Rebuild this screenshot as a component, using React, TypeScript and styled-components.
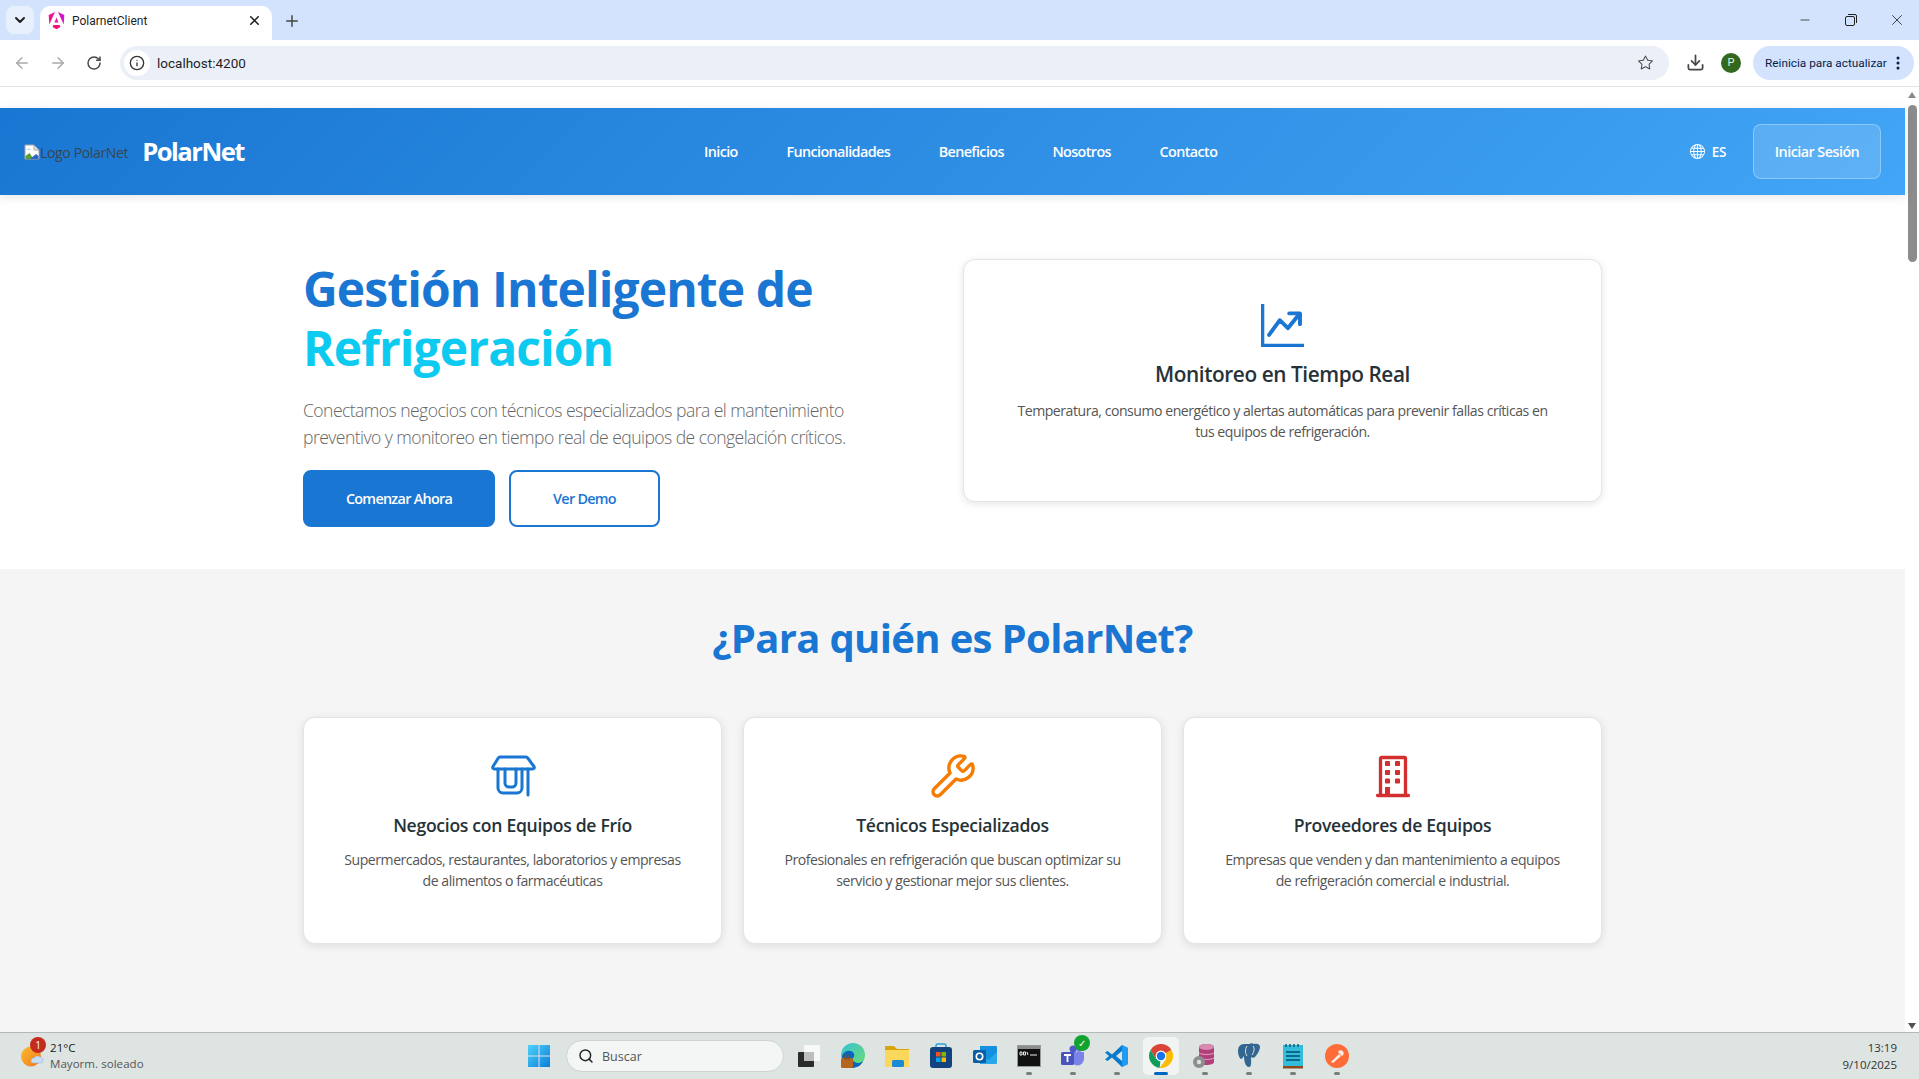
import React from "react";
import styled, { createGlobalStyle } from "styled-components";
import { BsGraphUpArrow, BsGlobe, BsStar, BsThreeDotsVertical } from "react-icons/bs";
import { ArrowLeft, ArrowRight, RotateCw, Info, Download, Plus, X, ChevronDown, Search, Minus, Wrench } from "lucide-react";

const UI = `"Open Sans", "Noto Sans", sans-serif`;

const Global = createGlobalStyle`
  html, body { margin: 0; padding: 0; height: 100%; overflow: hidden; background: #fff; }
  * { box-sizing: border-box; }
  body { font-family: ${UI}; }
`;

const Shell = styled.div`
  width: 1919px; height: 1079px; display: flex; flex-direction: column; overflow: hidden;
`;
const TabStrip = styled.div`
  height: 40px; flex: none; background: #d3e3fd; display: flex; align-items: flex-end; padding-left: 6px;
`;
const TabMenu = styled.div`
  width: 28px; height: 28px; margin-bottom: 6px; border-radius: 8px; background: #e9f0fd; display: flex; align-items: center; justify-content: center; color: #1f1f1f;
`;
const Tab = styled.div`
  width: 232px; height: 34px; margin-left: 6px; background: #fff; border-radius: 10px 10px 0 0; display: flex; align-items: center; padding: 0 10px 5px 8px; font: 400 12px "Roboto", sans-serif; color: #1f1f1f;
`;
const TabTitle = styled.span` margin-left: 7px; flex: 1; `;
const NewTab = styled.div` width: 40px; height: 34px; padding-bottom: 5px; display: flex; align-items: center; justify-content: center; color: #444; `;
const WinControls = styled.div` margin-left: auto; margin-right: -1px; display: flex; height: 40px; align-items: center; color: #222; `;
const WinButton = styled.div` width: 46px; display: flex; justify-content: center; align-items: center; `;
const Toolbar = styled.div`
  height: 47px; flex: none; background: #fff; border-bottom: 1px solid #e1e3e6; display: flex; align-items: center; padding: 0 5px 1px 4px;
`;
const NavIcon = styled.div<{ $dim?: boolean }>`
  width: 36px; height: 34px; display: flex; align-items: center; justify-content: center; color: ${p => (p.$dim ? "#a8abaf" : "#474747")};
`;
const UrlBar = styled.div`
  flex: 1; height: 34px; margin-left: 8px; border-radius: 17px; background: #ebf0f8; display: flex; align-items: center; padding: 0 16px 0 4px; font: 400 13.5px "Roboto", sans-serif; color: #1f1f1f;
`;
const InfoChip = styled.div` width: 26px; height: 26px; border-radius: 50%; background: #fff; display: flex; align-items: center; justify-content: center; margin-right: 7px; `;
const UrlText = styled.span` flex: 1; `;
const ToolRight = styled.div` width: 52px; display: flex; justify-content: center; color: #474747; `;
const Avatar = styled.div` width: 20px; height: 20px; border-radius: 50%; background: #33691e; color: #e8f5e0; font: 400 11px "Roboto", sans-serif; display: flex; align-items: center; justify-content: center; `;
const RestartPill = styled.div`
  width: 161px; height: 34px; margin-left: 12px; border-radius: 17px; background: #d3e3fd; color: #041e49; font: 400 11.8px "Roboto", sans-serif; display: flex; align-items: center; padding-left: 12px; gap: 3px; white-space: nowrap;
`;

const Viewport = styled.div` flex: 1; min-height: 0; display: flex; background: #fff; `;
const Page = styled.div` flex: 1; min-width: 0; padding-top: 21px; background: #fff; display: flex; flex-direction: column; `;
const Scrollbar = styled.div` width: 14px; flex: none; background: #fff; display: flex; flex-direction: column; align-items: center; padding-top: 5px; `;
const ScrollUp = styled.div` width: 0; height: 0; border-left: 4.5px solid transparent; border-right: 4.5px solid transparent; border-bottom: 6px solid #8a8a8a; `;
const ScrollThumb = styled.div` width: 9px; height: 157px; border-radius: 5px; background: #8c8c8c; margin-top: 7px; `;
const ScrollDown = styled.div` width: 0; height: 0; margin-top: auto; margin-bottom: 3px; border-left: 4.5px solid transparent; border-right: 4.5px solid transparent; border-top: 6px solid #505050; `;

const Header = styled.header`
  height: 87px; flex: none; background: linear-gradient(135deg, #1976d2, #42a5f5); display: flex; align-items: center; padding: 0 24px; box-shadow: 0 2px 10px rgba(0,0,0,.1); color: #fff; position: relative;
`;
const LogoGroup = styled.div` display: flex; align-items: center; width: 680px; `;
const BrokenImg = styled.span` display: inline-flex; align-items: center; padding-top: 1px; font: 400 14px ${UI}; letter-spacing: -.35px; color: #37474f; white-space: nowrap; `;
const Brand = styled.span` margin-left: 14px; font: 700 25.6px ${UI}; letter-spacing: -1.5px; color: #fff; `;
const Nav = styled.nav` display: flex; gap: 48.6px; `;
const NavLink = styled.a` font: 600 14.4px ${UI}; letter-spacing: -.62px; color: #fff; white-space: nowrap; `;
const HeaderRight = styled.div` margin-left: auto; display: flex; align-items: center; `;
const Lang = styled.div` display: flex; align-items: center; gap: 7px; font: 600 13.5px ${UI}; letter-spacing: -.3px; margin-right: 27px; `;
const Login = styled.button`
  width: 128px; height: 55px; border-radius: 8px; background: rgba(255,255,255,.15); border: 1px solid rgba(255,255,255,.3); color: #fff; font: 600 14.4px ${UI}; letter-spacing: -.55px; padding: 0;
`;

const Hero = styled.section` height: 374px; flex: none; background: #fff; display: flex; justify-content: center; padding-top: 64px; `;
const HeroInner = styled.div` width: 1299px; display: grid; grid-template-columns: 660px 639px; `;
const HeroText = styled.div` display: flex; flex-direction: column; `;
const H1 = styled.h1` margin: 0; font: 700 48px/59px ${UI}; letter-spacing: -.9px; color: #1976d2; `;
const Accent = styled.span` display: block; color: #0dcaf0; `;
const Lead = styled.p` margin: 20px 0 0; font: 300 17.6px/27px ${UI}; letter-spacing: -.57px; color: #666; white-space: nowrap; `;
const Buttons = styled.div` display: flex; gap: 14px; margin-top: 19px; `;
const Btn = styled.button<{ $outline?: boolean }>`
  height: 57px; width: ${p => (p.$outline ? 151 : 192)}px; border-radius: 8px; font: 600 14.4px ${UI}; letter-spacing: -.72px; padding: 0;
  background: ${p => (p.$outline ? "#fff" : "#1976d2")}; color: ${p => (p.$outline ? "#1976d2" : "#fff")}; border: 2px solid #1976d2;
`;
const HeroCard = styled.div`
  height: 243px; background: #fff; border: 1px solid #e4e4e4; border-radius: 12px; box-shadow: 0 2px 8px rgba(0,0,0,.1); display: flex; flex-direction: column; align-items: center; padding: 44px 48px 0; text-align: center; color: #1976d2;
`;
const ChartIcon = styled(BsGraphUpArrow)` stroke: currentColor; stroke-width: .45px; flex: none; `;
const CardTitle = styled.h3<{ $big?: boolean }>`
  margin: ${p => (p.$big ? "14px" : "15px")} 0 0; font: ${p => (p.$big ? "600 20.8px/27px" : "600 17.6px/24px")} ${UI}; letter-spacing: ${p => (p.$big ? "-.42px" : "-.3px")}; color: #263238;
`;
const CardText = styled.p` margin: 12px 0 0; font: 400 14.08px/21px ${UI}; letter-spacing: -.47px; color: #555; `;

const Audience = styled.section` flex: 1; min-height: 0; background: #f5f5f5; display: flex; flex-direction: column; align-items: center; `;
const H2 = styled.h2` margin: 40px 0 0; height: 58px; font: 700 40px/58px ${UI}; letter-spacing: -.65px; color: #1976d2; `;
const Cards = styled.div` width: 1299px; margin-top: 50px; display: grid; grid-template-columns: repeat(3, 1fr); gap: 21px; `;
const Card = styled.div`
  height: 227px; background: #fff; border: 1px solid #e4e4e4; border-radius: 12px; box-shadow: 0 2px 8px rgba(0,0,0,.1); display: flex; flex-direction: column; align-items: center; padding: 36px 32px 0; text-align: center;
`;
const IconSlot = styled.div<{ $c: string }>` height: 44px; display: flex; align-items: center; justify-content: center; color: ${p => p.$c}; `;
const ShopGlyph = styled.svg` margin-left: 2px; fill: none; stroke: #1976d2; stroke-width: 3; stroke-linejoin: round; stroke-linecap: round; `;

const Taskbar = styled.footer`
  height: 47px; flex: none; background: #dde4e1; border-top: 1px solid #b5b8b7; display: flex; align-items: center; font: 400 12px ${UI};
`;
const Weather = styled.div` flex: 0 0 517px; display: flex; align-items: center; padding-left: 21px; position: relative; `;
const Badge = styled.span` position: absolute; left: 30px; top: -3px; width: 16px; height: 16px; border-radius: 50%; background: #c42b1c; color: #fff; font-size: 10px; line-height: 16px; text-align: center; `;
const WeatherText = styled.div` margin-left: 6px; line-height: 16px; font-size: 11.5px; letter-spacing: .05px; color: #1a1a1a; `;
const Muted = styled.div` color: #555; `;
const StartBtn = styled.div` width: 44px; display: flex; justify-content: center; `;
const SearchBox = styled.div` width: 218px; height: 32px; margin: 0 3px 0 5px; background: #f3f6f4; border: 1px solid #cfd4d2; border-radius: 16px; display: flex; align-items: center; padding-left: 11px; gap: 8px; color: #555; font-size: 12.5px; `;
const TaskIcon = styled.div<{ $active?: boolean; $open?: boolean }>`
  width: ${p => (p.$active ? 36 : 44)}px; margin: ${p => (p.$active ? "0 4px" : "0")}; height: 38px; border-radius: 5px; display: flex; align-items: center; justify-content: center; position: relative;
  background: ${p => (p.$active ? "#f1f4f3" : "transparent")};
  &::after {
    content: ""; position: absolute; bottom: 0; left: 50%; transform: translateX(-50%); height: 3px; border-radius: 2px;
    width: ${p => (p.$active ? 14 : 6)}px; display: ${p => (p.$open || p.$active ? "block" : "none")}; background: ${p => (p.$active ? "#0067c0" : "#7a7d7c")};
  }
`;
const Check = styled.span` position: absolute; right: 5px; top: -2px; width: 16px; height: 16px; border-radius: 50%; background: #10a32f; color: #fff; font-size: 10px; line-height: 16px; text-align: center; `;
const Clock = styled.div` margin-left: auto; padding-right: 22px; text-align: right; font-size: 11.5px; line-height: 17px; color: #333; `;

const BrokenIcon = () => (
  <svg width="16" height="16" viewBox="0 0 16 16">
    <path d="M1 1h9l5 5v9H1z" fill="#fff" stroke="#a6a6a6" />
    <path d="M10 1v5h5z" fill="#dfe5ea" stroke="#a6a6a6" />
    <path d="M2 6c2-2 4-2 5 0H2z" fill="#b7d4f7" />
    <path d="M1.500 15v-3l4-3 4 6z" fill="#5aa02c" />
    <path d="M6 15l6-5 2.500 2v3z" fill="#2c66c9" />
  </svg>
);
const AngularIcon = () => (
  <svg width="17" height="18" viewBox="0 0 17 18">
    <defs>
      <linearGradient id="ng" x1="0" y1="1" x2="1" y2="0"><stop offset="0" stopColor="#f0143c" /><stop offset=".5" stopColor="#f5109a" /><stop offset="1" stopColor="#b818ef" /></linearGradient>
    </defs>
    <path d="M16.300 3l-.6 9.400L10 0zM12.400 15l-3.900 2.200L4.600 15l.8-2h6.200zM8.500 5.600l2 5H6.500zM1.300 12.400L.7 3 7 0z" fill="url(#ng)" />
  </svg>
);
const ShopIcon = () => (
  <ShopGlyph width="46" height="44" viewBox="0 0 46 44">
    <path d="M9 3h26a2 2 0 0 1 1.700 1L43 12.500c.8 1.300 0 2.500-1.500 2.500h-38c-1.500 0-2.300-1.200-1.500-2.500L7.300 4A2 2 0 0 1 9 3z" />
    <path d="M7 15v19a5 5 0 0 0 5 5h14a5 5 0 0 0 5-5V15" />
    <path d="M14 15v14a4 4 0 0 0 4 4h3a4 4 0 0 0 4-4V15" />
    <path d="M37 15v26" />
  </ShopGlyph>
);
const BuildingIcon = () => (
  <svg width="34" height="44" viewBox="0 0 34 44" fill="#d32f2f" stroke="none">
    <path d="M4.500 41V4.500a1 1 0 0 1 1-1h23a1 1 0 0 1 1 1V41" fill="none" stroke="#d32f2f" strokeWidth="3.300" />
    <path d="M1.500 41.500h31" fill="none" stroke="#d32f2f" strokeWidth="3.300" strokeLinecap="round" />
    <rect x="9" y="7" width="5" height="5" rx=".8" /><rect x="19" y="7" width="5" height="5" rx=".8" />
    <rect x="9" y="16" width="5" height="5" rx=".8" /><rect x="19" y="16" width="5" height="5" rx=".8" />
    <rect x="9" y="24.500" width="5" height="5" rx=".8" /><rect x="19" y="24.500" width="5" height="5" rx=".8" />
    <rect x="9" y="33" width="5" height="8" />
  </svg>
);
const WinLogo = () => (
  <svg width="24" height="24" viewBox="0 0 24 24">
    <defs><linearGradient id="w" x1="0" y1="0" x2="1" y2="1"><stop offset="0" stopColor="#4fd0fb" /><stop offset="1" stopColor="#0a7fd9" /></linearGradient></defs>
    <path fill="url(#w)" d="M1 1h10.500v10.500H1zM12.500 1H23v10.500H12.500zM1 12.500h10.500V23H1zM12.500 12.500H23V23H12.500z" />
  </svg>
);
const TaskView = () => (
  <svg width="24" height="24" viewBox="0 0 24 24">
    <rect x="7" y="1" width="16" height="16" fill="#f7f8f8" />
    <rect x="1" y="8" width="16" height="15" rx="1" fill="#2b2b2b" />
    <rect x="7" y="8" width="10" height="9" fill="#bdbfbe" />
  </svg>
);
const Edge = () => (
  <svg width="26" height="26" viewBox="0 0 26 26">
    <defs><linearGradient id="e" x1="0" y1="0" x2="1" y2="1"><stop offset="0" stopColor="#36c2d6" /><stop offset="1" stopColor="#6fdc72" /></linearGradient></defs>
    <circle cx="13" cy="12" r="12" fill="url(#e)" />
    <path d="M2 13c2-6 10-7 12-2 1 3-2 5-2 5 2 5 8 5 11 2-2 5-7 7-11 7-6 0-10-5-10-12z" fill="#0c63b8" />
    <rect x="1" y="15" width="12" height="10" rx="1.500" fill="#b5651d" />
    <rect x="5" y="13" width="4" height="3" fill="none" stroke="#8a4b14" />
  </svg>
);
const Folder = () => (
  <svg width="26" height="24" viewBox="0 0 26 24">
    <path d="M1 3a1 1 0 0 1 1-1h8l3 3h12v17H1z" fill="#d9a40c" />
    <rect x="1" y="6" width="24" height="17" fill="#fbd75b" />
    <rect x="8" y="16" width="12" height="7" rx="1.500" fill="#1a8ad4" />
  </svg>
);
const Store = () => (
  <svg width="24" height="26" viewBox="0 0 24 26">
    <path d="M7 5V3a2 2 0 0 1 2-2h6a2 2 0 0 1 2 2v2" fill="none" stroke="#2aa0dc" strokeWidth="1.500" />
    <rect x="1" y="4" width="22" height="21" rx="3" fill="#12437f" />
    <rect x="7" y="9" width="4.500" height="4.500" fill="#f25022" /><rect x="12.500" y="9" width="4.500" height="4.500" fill="#7fba00" />
    <rect x="7" y="14.500" width="4.500" height="4.500" fill="#00a4ef" /><rect x="12.500" y="14.500" width="4.500" height="4.500" fill="#ffb900" />
  </svg>
);
const Outlook = () => (
  <svg width="26" height="24" viewBox="0 0 26 24">
    <path d="M8 2h16a1 1 0 0 1 1 1v15a2 2 0 0 1-2 2H8z" fill="#1490df" />
    <path d="M8 11l8.500 5L25 8v10a2 2 0 0 1-2 2H8z" fill="#28a8ea" />
    <rect x="1" y="6" width="13" height="13" rx="1.500" fill="#0a5ea8" />
    <circle cx="7.500" cy="12.500" r="3.200" fill="none" stroke="#fff" strokeWidth="1.600" />
  </svg>
);
const Terminal = () => (
  <svg width="24" height="22" viewBox="0 0 24 22">
    <rect x=".5" y=".5" width="23" height="21" fill="#111" stroke="#9a9a9a" />
    <rect x="1" y="1" width="22" height="3" fill="#8d8d8d" />
    <path d="M3 7h2v3H3zM6.500 7h2v3h-2zM10 7l1 3M13 10h7" stroke="#eee" fill="none" />
  </svg>
);
const Teams = () => (
  <svg width="26" height="24" viewBox="0 0 26 24">
    <circle cx="19" cy="5" r="3" fill="#7b83eb" />
    <path d="M11 8h13v7a6 6 0 0 1-13 0z" fill="#7b83eb" />
    <circle cx="13" cy="5" r="3.500" fill="#5059c9" />
    <rect x="1" y="8" width="13" height="13" rx="1.500" fill="#4b53bc" />
    <path d="M4 11h7M7.500 11v7" stroke="#fff" strokeWidth="1.800" />
  </svg>
);
const VSCode = () => (
  <svg width="24" height="24" viewBox="0 0 24 24">
    <path d="M17 1l6 3v16l-6 3-10-9.500L2.500 17 0 15.500 4 12 0 8.500 2.500 7 7 10.500z" fill="#0a7acc" />
    <path d="M17 1l6 3v16l-6 3z" fill="#1f9cf0" />
    <path d="M17 7l-6 5 6 5z" fill="#dde4e1" />
  </svg>
);
const ChromeIcon = () => (
  <svg width="24" height="24" viewBox="0 0 24 24">
    <path d="M12 12L22.400 6A12 12 0 0 0 1.600 6L6.800 15z" fill="#db4437" />
    <path d="M12 12l-5.200 3L1.600 6a12 12 0 0 0 9 17.900z" fill="#0f9d58" />
    <path d="M12 12l10.400-6A12 12 0 0 1 10.600 23.900L17.200 15z" fill="#fbbc04" />
    <circle cx="12" cy="12" r="5.400" fill="#fff" />
    <circle cx="12" cy="12" r="4.200" fill="#1a73e8" />
  </svg>
);
const DbIcon = () => (
  <svg width="26" height="26" viewBox="0 0 26 26">
    <path d="M7 4c0-4 15-4 15 0v15c0 4-15 4-15 0z" fill="#b0407a" />
    <ellipse cx="14.500" cy="4" rx="7.500" ry="3" fill="#d98ab2" />
    <path d="M7 10c3 2 12 2 15 0M7 15c3 2 12 2 15 0" stroke="#e3a5c5" fill="none" />
    <circle cx="7" cy="19" r="6" fill="#8e8e8e" />
    <circle cx="7" cy="19" r="2.200" fill="#e0e0e0" />
  </svg>
);
const PgIcon = () => (
  <svg width="24" height="26" viewBox="0 0 24 26">
    <path d="M7 1C3 1 1 4 1 8c0 4 2 8 3 8s2-2 3-3c0 4 1 11 5 11 3 0 2-6 2-10 1 1 3 1 4 0 2-2 5-7 5-10 0-3-3-4-6-3-2-1-3-1-5 0-2 0-3 0-5 0z" fill="#336791" />
    <path d="M10 3c-2 3-2 7 0 10M16 3c2 2 1 6-1 9" stroke="#dde4e1" fill="none" strokeWidth="1" />
  </svg>
);
const Notepad = () => (
  <svg width="24" height="26" viewBox="0 0 24 26">
    <rect x="2" y="2" width="20" height="21" fill="#35bbdc" />
    <rect x="2" y="23" width="20" height="2.500" fill="#8d4b1d" />
    <path d="M5 1v3M9 1v3M13 1v3M17 1v3" stroke="#0d5d78" strokeWidth="1.500" />
    <path d="M5 9h14M5 13h14M5 17h14" stroke="#0b6a88" strokeWidth="2" />
  </svg>
);
const Postman = () => (
  <svg width="24" height="24" viewBox="0 0 24 24">
    <circle cx="12" cy="12" r="12" fill="#ff6c37" />
    <path d="M6 18l8-8 2 2-8 7zM13 8a3 3 0 1 1 4 4z" fill="#fff" opacity=".9" />
  </svg>
);
const WeatherIcon = () => (
  <svg width="23" height="21" viewBox="0 0 23 21">
    <defs><linearGradient id="s" x1="0" y1="0" x2="1" y2="1"><stop offset="0" stopColor="#f9c02c" /><stop offset="1" stopColor="#f4731f" /></linearGradient></defs>
    <circle cx="10" cy="10.500" r="10" fill="url(#s)" />
    <path d="M10 15a3 3 0 0 1 3-3 4 4 0 0 1 6-1 3 3 0 0 1 3 4 2 2 0 0 1-2 2H12a2 2 0 0 1-2-2z" fill="#c8dcf5" stroke="#8fb3e0" strokeWidth=".5" />
  </svg>
);

const cards = [
  { title: "Negocios con Equipos de Frío", text: "Supermercados, restaurantes, laboratorios y empresas de alimentos o farmacéuticas", c: "#1976d2", icon: <ShopIcon /> },
  { title: "Técnicos Especializados", text: "Profesionales en refrigeración que buscan optimizar su servicio y gestionar mejor sus clientes.", c: "#f57c00", icon: <Wrench size={48} strokeWidth={1.7} /> },
  { title: "Proveedores de Equipos", text: "Empresas que venden y dan mantenimiento a equipos de refrigeración comercial e industrial.", c: "#d32f2f", icon: <BuildingIcon /> },
];

const taskIcons: { el: React.ReactNode; open?: boolean; active?: boolean; check?: boolean }[] = [
  { el: <TaskView /> }, { el: <Edge /> }, { el: <Folder /> }, { el: <Store /> }, { el: <Outlook /> },
  { el: <Terminal />, open: true }, { el: <Teams />, open: true, check: true }, { el: <VSCode />, open: true },
  { el: <ChromeIcon />, active: true }, { el: <DbIcon />, open: true }, { el: <PgIcon />, open: true },
  { el: <Notepad />, open: true }, { el: <Postman />, open: true },
];

export default function App() {
  return (
    <Shell>
      <Global />
      <TabStrip>
        <TabMenu><ChevronDown size={16} strokeWidth={3} /></TabMenu>
        <Tab>
          <AngularIcon />
          <TabTitle>PolarnetClient</TabTitle>
          <X size={15} strokeWidth={2.5} />
        </Tab>
        <NewTab><Plus size={18} strokeWidth={2} /></NewTab>
        <WinControls>
          <WinButton><Minus size={14} strokeWidth={1.3} /></WinButton>
          <WinButton>
            <svg width="12" height="12" viewBox="0 0 12 12" fill="none" stroke="#222"><rect x=".5" y="2.500" width="9" height="9" rx="1.500" /><path d="M3 .5h7a1.500 1.500 0 0 1 1.500 1.500v7" /></svg>
          </WinButton>
          <WinButton><X size={18} strokeWidth={1.1} /></WinButton>
        </WinControls>
      </TabStrip>
      <Toolbar>
        <NavIcon $dim><ArrowLeft size={18} /></NavIcon>
        <NavIcon $dim><ArrowRight size={18} /></NavIcon>
        <NavIcon><RotateCw size={16} strokeWidth={2.2} /></NavIcon>
        <UrlBar>
          <InfoChip><Info size={16} color="#333" /></InfoChip>
          <UrlText>localhost:4200</UrlText>
          <BsStar size={15} color="#474747" />
        </UrlBar>
        <ToolRight><Download size={19} strokeWidth={2.2} /></ToolRight>
        <Avatar>P</Avatar>
        <RestartPill>Reinicia para actualizar<BsThreeDotsVertical size={16} /></RestartPill>
      </Toolbar>
      <Viewport>
        <Page>
          <Header>
            <LogoGroup>
              <BrokenImg><BrokenIcon />Logo PolarNet</BrokenImg>
              <Brand>PolarNet</Brand>
            </LogoGroup>
            <Nav>
              {["Inicio", "Funcionalidades", "Beneficios", "Nosotros", "Contacto"].map(n => <NavLink key={n}>{n}</NavLink>)}
            </Nav>
            <HeaderRight>
              <Lang><BsGlobe size={15} />ES</Lang>
              <Login>Iniciar Sesión</Login>
            </HeaderRight>
          </Header>
          <Hero>
            <HeroInner>
              <HeroText>
                <H1>Gestión Inteligente de<Accent>Refrigeración</Accent></H1>
                <Lead>Conectamos negocios con técnicos especializados para el mantenimiento<br />preventivo y monitoreo en tiempo real de equipos de congelación críticos.</Lead>
                <Buttons>
                  <Btn>Comenzar Ahora</Btn>
                  <Btn $outline>Ver Demo</Btn>
                </Buttons>
              </HeroText>
              <HeroCard>
                <ChartIcon size={43} />
                <CardTitle $big>Monitoreo en Tiempo Real</CardTitle>
                <CardText>Temperatura, consumo energético y alertas automáticas para prevenir fallas críticas en tus equipos de refrigeración.</CardText>
              </HeroCard>
            </HeroInner>
          </Hero>
          <Audience>
            <H2>¿Para quién es PolarNet?</H2>
            <Cards>
              {cards.map(c => (
                <Card key={c.title}>
                  <IconSlot $c={c.c}>{c.icon}</IconSlot>
                  <CardTitle>{c.title}</CardTitle>
                  <CardText>{c.text}</CardText>
                </Card>
              ))}
            </Cards>
          </Audience>
        </Page>
        <Scrollbar>
          <ScrollUp />
          <ScrollThumb />
          <ScrollDown />
        </Scrollbar>
      </Viewport>
      <Taskbar>
        <Weather>
          <WeatherIcon />
          <Badge>1</Badge>
          <WeatherText>21°C<Muted>Mayorm. soleado</Muted></WeatherText>
        </Weather>
        <StartBtn><WinLogo /></StartBtn>
        <SearchBox><Search size={16} color="#222" strokeWidth={2.2} />Buscar</SearchBox>
        {taskIcons.map((t, i) => (
          <TaskIcon key={i} $active={t.active} $open={t.open}>
            {t.el}
            {t.check && <Check>✓</Check>}
          </TaskIcon>
        ))}
        <Clock>13:19<br />9/10/2025</Clock>
      </Taskbar>
    </Shell>
  );
}
